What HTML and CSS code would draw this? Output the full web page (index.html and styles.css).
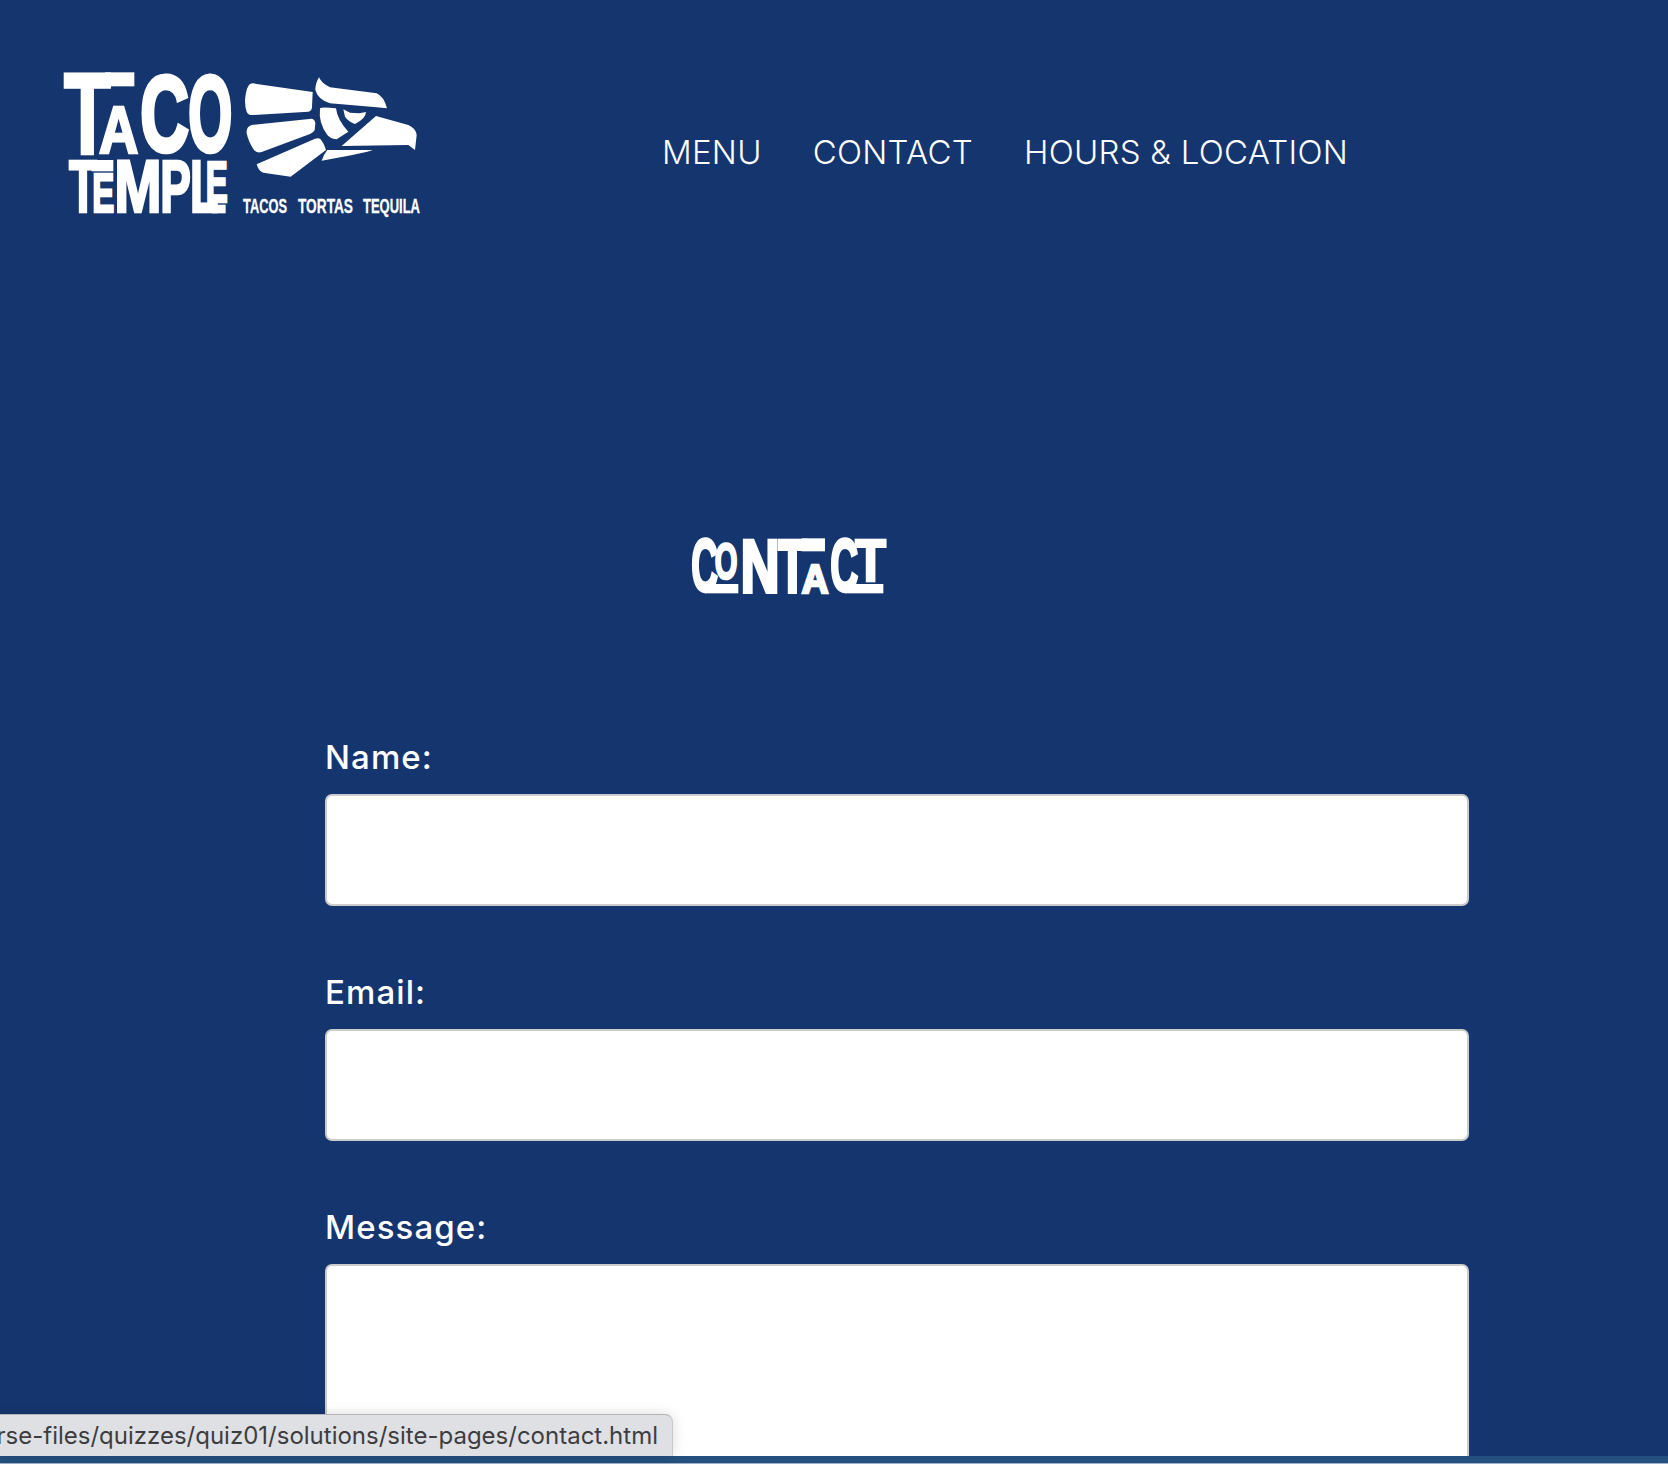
FILE: index.html
```html
<!DOCTYPE html>
<html lang="en">
<head>
<meta charset="utf-8">
<title>Contact - Taco Temple</title>
<link rel="stylesheet" href="styles.css">
</head>
<body>
<header class="site-header">
  <a class="logo" href="#" aria-label="Taco Temple">
    <svg class="logo-svg" width="380" height="165" viewBox="0 0 380 165">
      <g transform="scale(0.33333)">
        <rect class="fill-white" x="150" y="22" width="88" height="42"/>
        <rect class="fill-white" x="110" y="285" width="65" height="34"/>
        <rect class="fill-white" x="470" y="419" width="42" height="26"/>
        <text class="wordmark">
          <tspan x="27" y="264" font-size="345" stroke-width="10" textLength="140" lengthAdjust="spacingAndGlyphs">T</tspan>
          <tspan x="132" y="264" font-size="200" stroke-width="8" textLength="118" lengthAdjust="spacingAndGlyphs">A</tspan>
          <tspan x="256" y="258" font-size="325" stroke-width="14" textLength="146" lengthAdjust="spacingAndGlyphs">C</tspan>
          <tspan x="400" y="258" font-size="325" stroke-width="14" textLength="132" lengthAdjust="spacingAndGlyphs">O</tspan>
        </text>
        <text class="wordmark">
          <tspan x="42" y="441" font-size="221" stroke-width="8" textLength="84" lengthAdjust="spacingAndGlyphs">T</tspan>
          <tspan x="112" y="441" font-size="167" stroke-width="8" textLength="66" lengthAdjust="spacingAndGlyphs">E</tspan>
          <tspan x="178" y="441" font-size="221" stroke-width="8" textLength="142" lengthAdjust="spacingAndGlyphs">M</tspan>
          <tspan x="316" y="441" font-size="221" stroke-width="8" textLength="92" lengthAdjust="spacingAndGlyphs">P</tspan>
          <tspan x="405" y="441" font-size="221" stroke-width="8" textLength="85" lengthAdjust="spacingAndGlyphs">L</tspan>
          <tspan x="452" y="411" font-size="170" stroke-width="8" textLength="66" lengthAdjust="spacingAndGlyphs">E</tspan>
        </text>
      </g>
      <g transform="translate(185 5) scale(0.33333)" class="fill-white">
        <path d="M30 42Q38 38 50 42L218 66L216 112Q215 124 205 125L40 135Q25 137 20 125Q13 105 16 80Q20 50 30 42Z"/>
        <path d="M35 165L215 146Q225 148 226 160L224 180Q222 186 210 192L65 246Q50 250 42 240Q25 215 20 190Q18 170 35 165Z"/>
        <path d="M50 283L225 206Q235 202 242 208Q252 220 258 240L152 320L70 308Q55 303 50 283Z"/>
        <path d="M237 22Q245 40 270 52L410 70Q432 80 441 115L410 112L270 100Q235 90 226 60Q226 40 237 22Z"/>
        <path d="M240 115Q245 110 288 115Q292 150 325 185L290 208Q275 208 262 195Q235 160 240 115Z"/>
        <path d="M310 118L330 128L358 130L378 126Q378 145 345 162Q325 155 315 140Z"/>
        <path d="M408 138L505 165Q528 175 530 195L525 240L505 225L305 228Z"/>
        <path d="M262 240L398 240Q380 248 245 272Q250 255 262 240Z"/>
      </g>
      <text class="tagline" y="148">
        <tspan x="188" textLength="44" lengthAdjust="spacingAndGlyphs">TACOS</tspan>
        <tspan x="243" textLength="55" lengthAdjust="spacingAndGlyphs">TORTAS</tspan>
        <tspan x="308" textLength="57" lengthAdjust="spacingAndGlyphs">TEQUILA</tspan>
      </text>
    </svg>
  </a>
  <nav class="main-nav">
    <a href="#">MENU</a>
    <a href="#">CONTACT</a>
    <a href="#">HOURS &amp; LOCATION</a>
  </nav>
</header>
<main class="content">
  <h1 class="page-title">
    <svg class="title-svg" width="230" height="80" viewBox="0 0 230 80" role="img" aria-label="Contact">
      <g transform="scale(0.33333)">
        <rect class="fill-white" x="105" y="192" width="100" height="28"/>
        <rect class="fill-white" x="395" y="55" width="70" height="39"/>
        <rect class="fill-white" x="525" y="192" width="115" height="28"/>
        <text class="wordmark">
          <tspan x="64" y="212" font-size="220" stroke-width="10" textLength="80" lengthAdjust="spacingAndGlyphs">C</tspan>
          <tspan x="134" y="178" font-size="150" stroke-width="8" textLength="68" lengthAdjust="spacingAndGlyphs">O</tspan>
          <tspan x="212" y="216" font-size="225" stroke-width="12" textLength="116" lengthAdjust="spacingAndGlyphs">N</tspan>
          <tspan x="325" y="216" font-size="225" stroke-width="12" textLength="85" lengthAdjust="spacingAndGlyphs">T</tspan>
          <tspan x="395" y="220" font-size="124" stroke-width="8" textLength="80" lengthAdjust="spacingAndGlyphs">A</tspan>
          <tspan x="481" y="212" font-size="220" stroke-width="10" textLength="84" lengthAdjust="spacingAndGlyphs">C</tspan>
          <tspan x="556" y="184" font-size="177" stroke-width="8" textLength="92" lengthAdjust="spacingAndGlyphs">T</tspan>
        </text>
      </g>
    </svg>
  </h1>
  <form class="contact-form">
    <div class="field">
      <label for="name">Name:</label>
      <input class="control" id="name" type="text">
    </div>
    <div class="field">
      <label for="email">Email:</label>
      <input class="control" id="email" type="text">
    </div>
    <div class="field field-last">
      <label for="message">Message:</label>
      <textarea class="control control-area" id="message"></textarea>
    </div>
  </form>
</main>
<div class="bottom-strip"></div>
<div class="status-bubble"><span>rse-files/quizzes/quiz01/solutions/site-pages/contact.html</span></div>
</body>
</html>
```
FILE: styles.css
```css
* {
  box-sizing: border-box;
}

html,
body {
  height: 1464px;
  margin: 0;
  overflow: hidden;
}

body {
  position: relative;
  background: #15356f;
  color: #fff;
  font-family: Inter, "Liberation Sans", sans-serif;
}

.site-header {
  display: flex;
  align-items: flex-start;
  height: 230px;
  padding: 65px 0 0 55px;
}

.logo,
.logo-svg,
.title-svg {
  display: block;
}

.logo-svg,
.title-svg {
  overflow: visible;
}

.wordmark {
  font-family: "Liberation Sans", sans-serif;
  font-weight: 700;
  fill: #fff;
  stroke: #fff;
  stroke-linejoin: miter;
}

.tagline {
  font-family: "Liberation Sans", sans-serif;
  font-weight: 700;
  font-size: 21px;
  fill: #fff;
  stroke: #fff;
  stroke-width: 0.3px;
}

.fill-white {
  fill: #fff;
}

.main-nav {
  display: flex;
  gap: 51px;
  margin: 67px 0 0 227px;
}

.main-nav a {
  color: #fff;
  font-size: 33px;
  font-weight: 300;
  letter-spacing: 0.25px;
  line-height: 40px;
  text-decoration: none;
}

.content {
  padding: 290px 199px 0 325px;
}

.page-title {
  margin: 0 0 138px 345px;
  height: 80px;
}

.field {
  margin-bottom: 67px;
}

.field-last {
  margin-bottom: 0;
}

.field label {
  display: block;
  height: 40px;
  margin-bottom: 16px;
  font-size: 33px;
  font-weight: 500;
  letter-spacing: 1.1px;
  line-height: 38px;
}

.control {
  display: block;
  width: 100%;
  height: 112px;
  padding: 10px;
  background: #fff;
  border: 2px solid #ccc;
  border-radius: 7px;
  resize: none;
}

.control-area {
  height: 200px;
}

.bottom-strip {
  position: absolute;
  left: 0;
  right: 0;
  bottom: 0;
  height: 8px;
  background: linear-gradient(#24507f 0 88%, #9fb2c6 88%);
}

.status-bubble {
  position: absolute;
  left: 0;
  bottom: 8px;
  width: 673px;
  height: 42px;
  padding-right: 14px;
  overflow: hidden;
  display: flex;
  justify-content: flex-end;
  align-items: center;
  white-space: nowrap;
  background: #dfe0e4;
  border-top: 1px solid #b4b4b6;
  border-right: 1px solid #c8c8ca;
  border-top-right-radius: 8px;
  box-shadow: 0 0 14px rgba(0, 0, 0, 0.14);
  color: #3d3d40;
  font-size: 24px;
}
```
